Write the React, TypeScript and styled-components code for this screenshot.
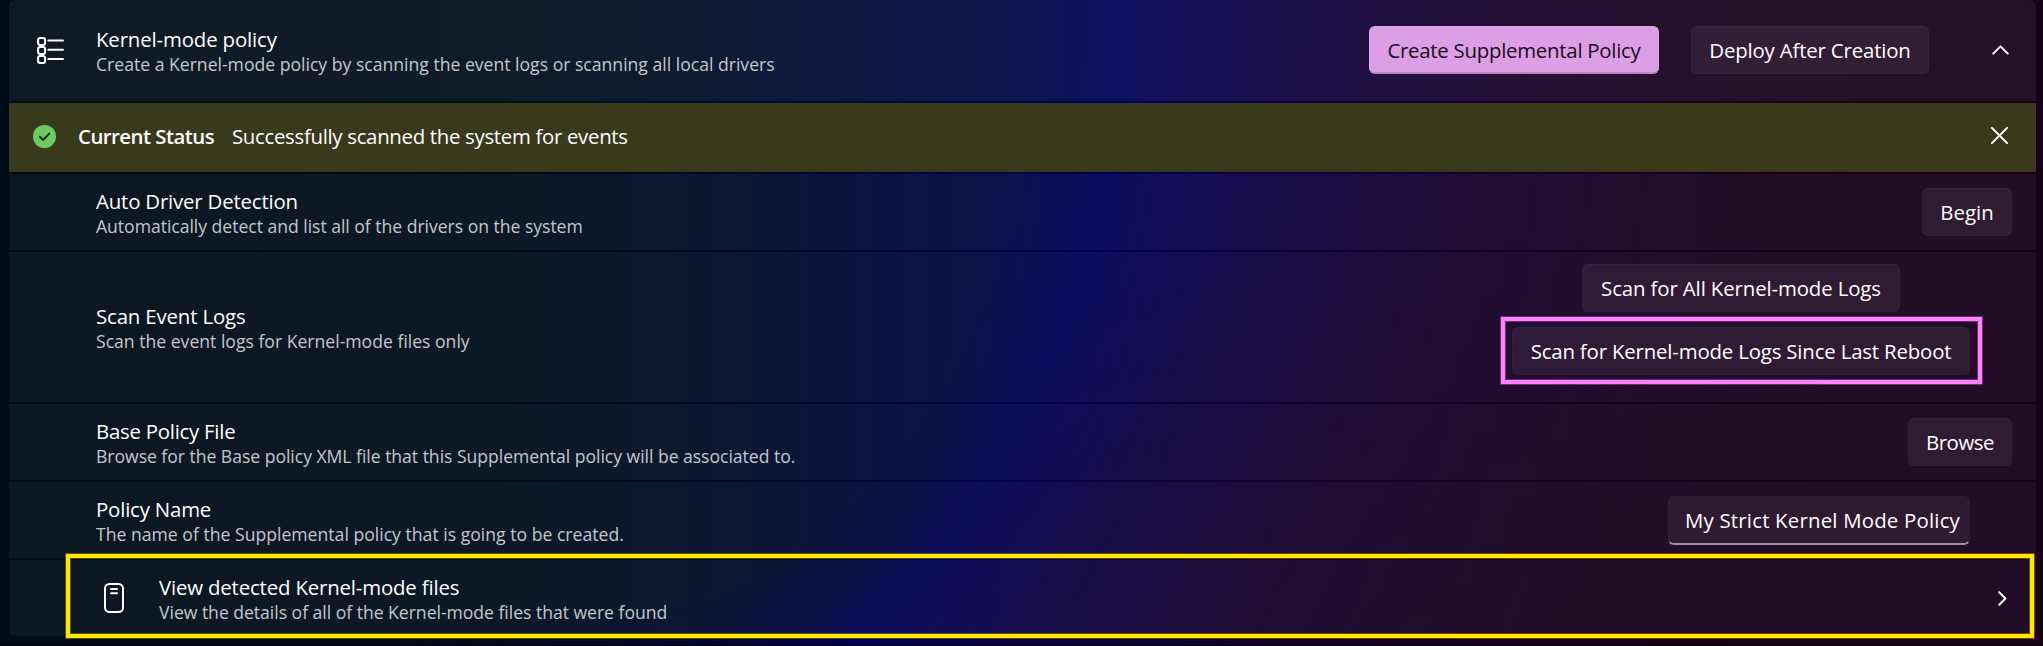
import React from 'react';
import styled, { createGlobalStyle, css } from 'styled-components';

const GlobalStyle = createGlobalStyle`
  * { box-sizing: border-box; }
  body {
    margin: 0;
    background: #000a18;
    font-family: "Open Sans", "Noto Sans", sans-serif;
    color: #fff;
  }
`;

const Page = styled.main`
  height: 646px;
  padding: 0 7px 0 9px;
  overflow: hidden;
  border-bottom: 1px solid #000008;
  background:
    radial-gradient(650px 420px at 1450px 646px, rgba(24, 0, 26, 0.5), rgba(24, 0, 26, 0)) no-repeat,
    radial-gradient(
      500px 735px at 0 0,
      rgba(0, 0, 82, 0) 82%,
      rgba(0, 0, 82, 0.12) 87%,
      rgba(0, 0, 82, 0.4) 93%,
      rgba(0, 0, 84, 0.9) 98%,
      #000058 101%,
      #040052 109%,
      #07004b 118%,
      #0d003e 138%,
      #100034 152%,
      #140029 178%,
      #170020 210%,
      #18001b 250%
    ) 610px 0 / 1433px 646px no-repeat,
    radial-gradient(300px 40px at 610px 646px, rgba(0, 0, 82, 0.12), rgba(0, 0, 82, 0)) 0 0 / 610px 646px no-repeat,
    linear-gradient(90deg, #000b16 0, #000c1a 460px, #000b24 680px, #000833 860px, #000548 1040px, #00004e 1100px);
`;

const Panel = styled.section`
  display: flex;
  flex-direction: column;
  gap: 2px;
`;

const Row = styled.div<{ $height?: number }>`
  position: relative;
  display: flex;
  align-items: center;
  height: ${(p) => p.$height ?? 76}px;
  padding: 0 24px 0 87px;
  background: rgba(255, 255, 255, 0.05);
`;

const HeaderRow = styled(Row)`
  height: 101px;
  padding: 0 27px 1px 28px;
  border-radius: 6px 6px 0 0;
  background: rgba(255, 255, 255, 0.062);
`;

const StatusRow = styled(Row)`
  height: 69px;
  padding: 0 28px 2px 24px;
  background: #393a1c;
`;

const LinkRow = styled(Row)`
  padding: 0 29px 0 95px;
  border-radius: 0 0 6px 6px;
`;

const TextBlock = styled.div<{ $indent?: number }>`
  flex: 1;
  padding-top: 2px;
  margin-left: ${(p) => p.$indent ?? 0}px;
  white-space: nowrap;
`;

const Title = styled.div<{ $track?: number }>`
  font-size: 20.4px;
  line-height: 26px;
  letter-spacing: ${(p) => p.$track ?? 0}px;
`;

const Description = styled.div<{ $track?: number }>`
  font-size: 17.6px;
  line-height: 25px;
  margin-bottom: -1px;
  letter-spacing: ${(p) => p.$track ?? 0}px;
  color: rgba(255, 255, 255, 0.77);
`;

const Button = styled.button<{ $width: number; $track?: number; $accent?: boolean }>`
  width: ${(p) => p.$width}px;
  height: 48px;
  padding: 0;
  border: 1px solid rgba(255, 255, 255, 0.025);
  border-top-color: rgba(255, 255, 255, 0.045);
  border-radius: 6px;
  background: rgba(255, 255, 255, 0.06);
  color: #fff;
  font: 400 20.4px/44px "Open Sans", "Noto Sans", sans-serif;
  letter-spacing: ${(p) => p.$track ?? 0}px;
  text-align: center;
  white-space: nowrap;
  ${(p) =>
    p.$accent &&
    css`
      padding-top: 1px;
      border-color: #e0a7e8;
      border-bottom: 2px solid #bd88c5;
      background: #dc9fe5;
      color: #160c18;
    `}
`;

const HeaderActions = styled.div`
  display: flex;
  gap: 32px;
  margin-right: 63px;
`;

const ScanActions = styled.div`
  display: flex;
  flex-direction: column;
  align-items: center;
  gap: 15px;
  margin-right: 42px;
  padding-bottom: 15px;
`;

const Highlighted = styled.div`
  position: relative;
  height: 48px;
`;

const Marker = styled.span<{ $color: string; $edge: string }>`
  position: absolute;
  border: 4px solid ${(p) => p.$color};
  box-shadow: 0 0 0 1px ${(p) => p.$edge}, inset 0 0 0 1px ${(p) => p.$edge};
  pointer-events: none;
`;

const ButtonMarker = styled(Marker)`
  inset: -10px -12px -9px -11px;
`;

const RowMarker = styled(Marker)`
  inset: -6px 2px -2px 57px;
`;

const NameField = styled.input`
  width: 302px;
  height: 49px;
  margin-right: 42px;
  padding: 0 0 0 16px;
  border: 1px solid rgba(255, 255, 255, 0.02);
  border-bottom: 2px solid #9c919f;
  border-radius: 6px;
  outline: none;
  background: rgba(255, 255, 255, 0.055);
  color: #fff;
  font: 400 20.4px/46px "Open Sans", "Noto Sans", sans-serif;
  letter-spacing: 0.2px;
`;

const StatusTitle = styled.strong`
  width: 154px;
  margin-left: 22px;
  padding-bottom: 2px;
  font-size: 20.4px;
  font-weight: 600;
  letter-spacing: -0.53px;
  white-space: nowrap;
`;

const StatusMessage = styled.span`
  flex: 1;
  padding-bottom: 2px;
  font-size: 20.4px;
  letter-spacing: -0.31px;
`;

const Icon = styled.svg`
  display: block;
  flex: none;
  fill: none;
  stroke: #fff;
  stroke-width: 2;
  stroke-linecap: round;
  stroke-linejoin: round;
`;

const CloseGlyph = styled(Icon)`
  margin-bottom: 2px;
`;

const ListIcon = () => (
  <Icon width="27" height="27" viewBox="0 0 27 27" strokeWidth="2.2">
    <rect x="1.1" y="1.1" width="7" height="7" rx="2" />
    <rect x="1.1" y="10" width="7" height="7" rx="2" />
    <rect x="1.1" y="18.9" width="7" height="7" rx="2" />
    <path d="M11.3 3.6H26M11.3 12.8H26M11.3 22H26" />
  </Icon>
);

const CheckIcon = () => (
  <Icon width="23" height="23" viewBox="0 0 23 23">
    <circle cx="11.5" cy="11.5" r="11.5" fill="#6ccb5f" stroke="none" />
    <path d="M6.8 11.8 10 15 16.2 8.6" stroke="#14240f" />
  </Icon>
);

const CloseIcon = () => (
  <CloseGlyph width="17" height="17" viewBox="0 0 17 17">
    <path d="M.9.9 16.1 16.1M16.1.9.9 16.1" />
  </CloseGlyph>
);

const ChevronUp = () => (
  <Icon width="17" height="10" viewBox="0 0 17 10">
    <path d="M1.2 8.6 8.5 1.4 15.8 8.6" />
  </Icon>
);

const ChevronRight = () => (
  <Icon width="9" height="15" viewBox="0 0 9 15">
    <path d="M1.2 1.2 7.4 7.5 1.2 13.8" />
  </Icon>
);

const DeviceIcon = () => (
  <Icon width="20" height="30" viewBox="0 0 20 30">
    <rect x="1" y="1" width="18" height="28" rx="4.5" />
    <path d="M7 6.1H13M7 10.3H13" />
  </Icon>
);

export default function App() {
  return (
    <>
      <GlobalStyle />
      <Page>
        <Panel>
          <HeaderRow>
            <ListIcon />
            <TextBlock $indent={32}>
              <Title $track={-0.14}>Kernel-mode policy</Title>
              <Description $track={0}>
                Create a Kernel-mode policy by scanning the event logs or scanning all local drivers
              </Description>
            </TextBlock>
            <HeaderActions>
              <Button $accent $width={290} $track={-0.26}>Create Supplemental Policy</Button>
              <Button $width={238} $track={-0.17}>Deploy After Creation</Button>
            </HeaderActions>
            <ChevronUp />
          </HeaderRow>

          <StatusRow>
            <CheckIcon />
            <StatusTitle>Current Status</StatusTitle>
            <StatusMessage>Successfully scanned the system for events</StatusMessage>
            <CloseIcon />
          </StatusRow>

          <Row>
            <TextBlock>
              <Title $track={-0.18}>Auto Driver Detection</Title>
              <Description $track={-0.03}>Automatically detect and list all of the drivers on the system</Description>
            </TextBlock>
            <Button $width={90}>Begin</Button>
          </Row>

          <Row $height={150}>
            <TextBlock>
              <Title $track={-0.15}>Scan Event Logs</Title>
              <Description $track={0}>Scan the event logs for Kernel-mode files only</Description>
            </TextBlock>
            <ScanActions>
              <Button $width={318} $track={-0.12}>Scan for All Kernel-mode Logs</Button>
              <Highlighted>
                <Button $width={458} $track={-0.17}>Scan for Kernel-mode Logs Since Last Reboot</Button>
                <ButtonMarker $color="#ff80ff" $edge="rgba(255, 128, 255, 0.3)" />
              </Highlighted>
            </ScanActions>
          </Row>

          <Row>
            <TextBlock>
              <Title $track={-0.25}>Base Policy File</Title>
              <Description $track={-0.035}>
                Browse for the Base policy XML file that this Supplemental policy will be associated to.
              </Description>
            </TextBlock>
            <Button $width={104} $track={-0.47}>Browse</Button>
          </Row>

          <Row>
            <TextBlock>
              <Title $track={-0.18}>Policy Name</Title>
              <Description $track={0.01}>The name of the Supplemental policy that is going to be created.</Description>
            </TextBlock>
            <NameField defaultValue="My Strict Kernel Mode Policy" />
          </Row>

          <LinkRow>
            <DeviceIcon />
            <TextBlock $indent={35}>
              <Title $track={-0.165}>View detected Kernel-mode files</Title>
              <Description $track={-0.027}>View the details of all of the Kernel-mode files that were found</Description>
            </TextBlock>
            <ChevronRight />
            <RowMarker $color="#ffe600" $edge="rgba(255, 230, 0, 0.3)" />
          </LinkRow>
        </Panel>
      </Page>
    </>
  );
}
